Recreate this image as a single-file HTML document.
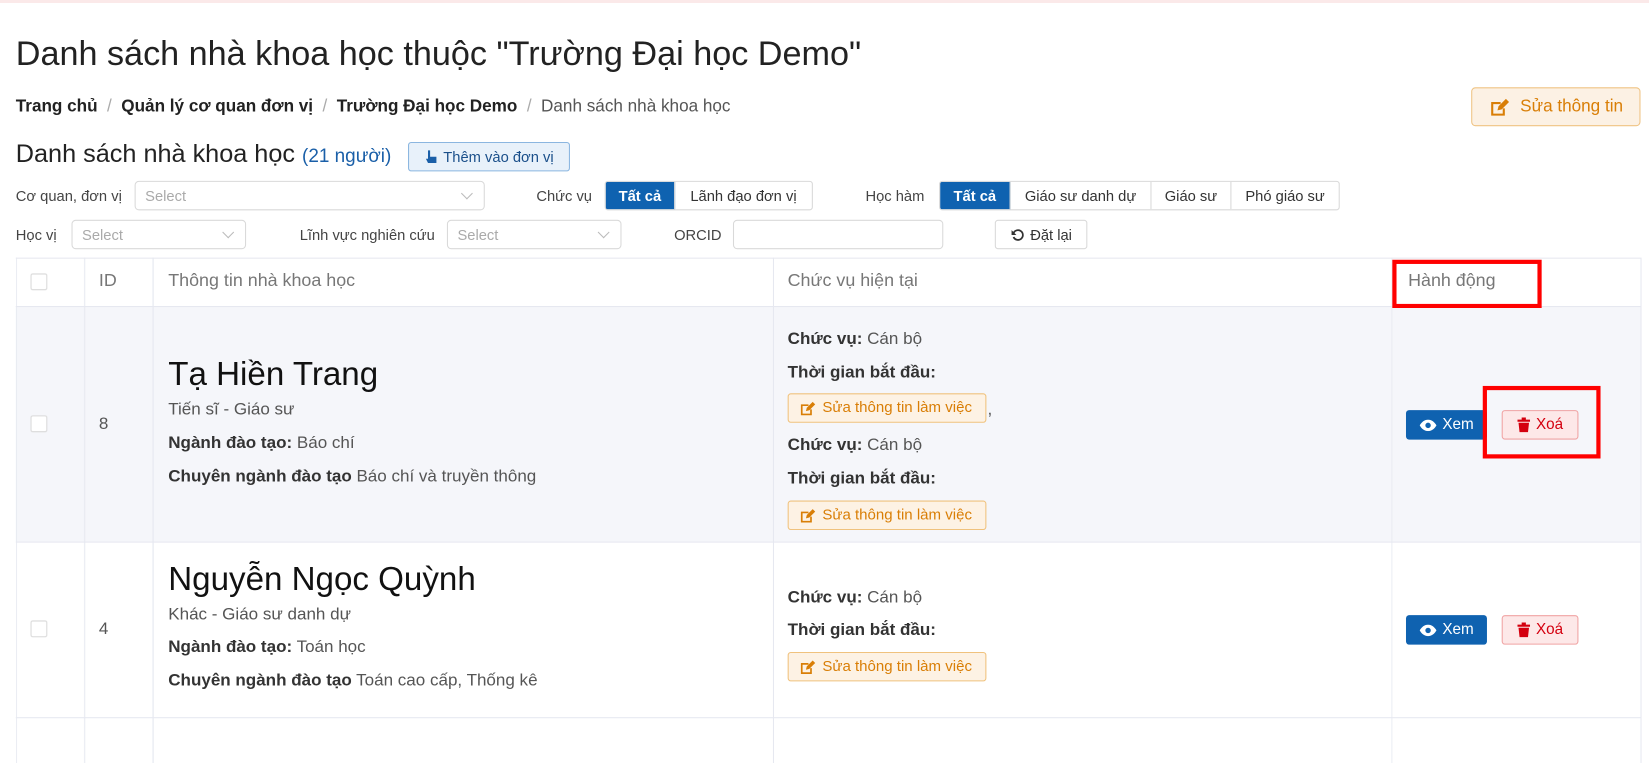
<!DOCTYPE html>
<html><head><meta charset="utf-8"><style>
*{box-sizing:border-box;margin:0;padding:0}
body{width:1649px;height:726px;overflow:hidden;background:#fff;font-family:"Liberation Sans","Noto Sans CJK SC",sans-serif;color:#333;position:relative;font-size:14px}
#w{position:absolute;left:0;top:0;width:1568px;height:691px;transform:scale(1.0516);transform-origin:0 0}
.a{position:absolute;white-space:nowrap}
.topline{position:absolute;left:0;top:0;width:1649px;height:3px;background:#fbe9e9}
h1{position:absolute;left:15px;top:33px;font-size:32.5px;font-weight:400;color:#222;white-space:nowrap}
.bc{left:15px;top:92px;font-size:16.3px;color:#555}
.bc b{color:#222}
.bc s{text-decoration:none;color:#aaa;margin:0 9px}
.btn{position:absolute;border:1px solid #d9d9d9;border-radius:3px;background:#fff;font-size:14px;display:flex;align-items:center;justify-content:center;color:#333;white-space:nowrap}
.sel{position:absolute;border:1px solid #d9d9d9;border-radius:4px;height:28px;color:#aaa;font-size:14px;padding:5px 9px}
.dd:after{content:"";position:absolute;right:12px;top:7px;width:7px;height:7px;border-right:1px solid #bbb;border-bottom:1px solid #bbb;transform:rotate(45deg)}
.lbl{position:absolute;font-size:14px;color:#444;white-space:nowrap}
.grp{position:absolute;display:flex;height:28px;border:1px solid #d9d9d9;border-radius:3px;overflow:hidden}
.grp span{display:flex;align-items:center;justify-content:center;font-size:14px;border-right:1px solid #d9d9d9;color:#333;white-space:nowrap}
.grp span:last-child{border-right:0}
.grp .on{background:#0f62b0;color:#fff;font-weight:bold}
.vl{position:absolute;width:1px;background:#e6e8f0}
.hl{position:absolute;height:1px;background:#e6e8f0;left:15px;width:1545px}
.cb{position:absolute;width:16px;height:16px;border:1px solid #d9d9d9;border-radius:2px;background:#fff}
.th{position:absolute;font-size:17px;color:#777;top:257px;white-space:nowrap}
.name{position:absolute;font-size:31.5px;color:#111;left:160px;white-space:nowrap}
.t{position:absolute;font-size:16.2px;color:#555;white-space:nowrap}
.t b{color:#333}
.ob{position:absolute;left:749px;width:189px;height:28px;background:#fdf2e4;border:1px solid #f0c27d;border-radius:3px;color:#d97e06;font-size:14.3px;display:flex;align-items:center;padding-left:10px;gap:6px;white-space:nowrap}
.xem{position:absolute;left:1337px;width:77px;height:28px;background:#0f62b0;color:#fff;border-radius:3px;font-size:14.5px;display:flex;align-items:center;justify-content:center;gap:6px}
.xoa{position:absolute;left:1428px;width:73px;height:28px;background:#fde8e8;border:1px solid #f0a3a3;color:#d4000f;border-radius:3px;font-size:14.5px;display:flex;align-items:center;justify-content:center;gap:6px}
.red{position:absolute;border:4px solid #ff0000}
</style></head><body>
<div class="topline"></div>
<div id="w">
<h1>Danh sách nhà khoa học thuộc "Trường Đại học Demo"</h1>
<div class="a bc"><b>Trang chủ</b><s>/</s><b>Quản lý cơ quan đơn vị</b><s>/</s><b>Trường Đại học Demo</b><s>/</s>Danh sách nhà khoa học</div>
<div class="btn" style="left:1399px;top:83px;width:161px;height:37px;background:#fcf1e4;border-color:#efc383;color:#d97e06;font-size:16.3px;gap:10px;border-radius:4px">
<svg width="20" height="18" viewBox="0 0 20 18"><path d="M2 4h9v2H4v9h9v-5h2v7H2z" fill="#d97e06"/><path d="M8 12l1-4 7-7 3 3-7 7z" fill="#d97e06"/></svg>Sửa thông tin</div>
<div class="a" style="left:15px;top:133px;font-size:24px;color:#222">Danh sách nhà khoa học <span style="font-size:18px;color:#1a5fa8">(21 người)</span></div>
<div class="btn" style="left:388px;top:135px;width:154px;height:28px;background:#e8f1fa;border-color:#8bb6e0;color:#1a4f8a;gap:6px">
<svg width="12" height="14" viewBox="0 0 12 14"><path d="M3 1h2v6h6v6H3L1 9h2z" fill="#1a5fa8"/></svg>Thêm vào đơn vị</div>

<div class="lbl" style="left:15px;top:178px">Cơ quan, đơn vị</div>
<div class="sel dd" style="left:128px;top:172px;width:333px">Select</div>
<div class="lbl" style="left:510px;top:178px">Chức vụ</div>
<div class="grp" style="left:575px;top:172px;width:198px"><span class="on" style="width:66px">Tất cả</span><span style="flex:1">Lãnh đạo đơn vị</span></div>
<div class="lbl" style="left:823px;top:178px">Học hàm</div>
<div class="grp" style="left:893px;top:172px;width:381px"><span class="on" style="width:67px">Tất cả</span><span style="width:134px">Giáo sư danh dự</span><span style="width:76px">Giáo sư</span><span style="flex:1">Phó giáo sư</span></div>

<div class="lbl" style="left:15px;top:215px">Học vị</div>
<div class="sel dd" style="left:68px;top:209px;width:166px">Select</div>
<div class="lbl" style="left:285px;top:215px">Lĩnh vực nghiên cứu</div>
<div class="sel dd" style="left:425px;top:209px;width:166px">Select</div>
<div class="lbl" style="left:641px;top:215px">ORCID</div>
<div class="sel" style="left:697px;top:209px;width:200px"></div>
<div class="btn" style="left:946px;top:209px;width:88px;height:28px;gap:6px"><svg width="13" height="13" viewBox="0 0 14 14"><path d="M3 5a5 5 0 1 1 0 4" fill="none" stroke="#333" stroke-width="1.8"/><path d="M1 2v5h5z" fill="#333"/></svg>Đặt lại</div>

<div style="position:absolute;left:15px;top:291px;width:1545px;height:224px;background:#f5f6fa"></div>
<div class="hl" style="top:245px"></div><div class="hl" style="top:291px"></div><div class="hl" style="top:515px"></div><div class="hl" style="top:682px"></div>
<div class="vl" style="left:15px;top:245px;height:481px"></div>
<div class="vl" style="left:80px;top:245px;height:481px"></div>
<div class="vl" style="left:145px;top:245px;height:481px"></div>
<div class="vl" style="left:735px;top:245px;height:481px"></div>
<div class="vl" style="left:1323px;top:245px;height:481px"></div>
<div class="vl" style="left:1560px;top:245px;height:481px"></div>
<div class="cb" style="left:29px;top:260px"></div>
<div class="th" style="left:94px">ID</div>
<div class="th" style="left:160px">Thông tin nhà khoa học</div>
<div class="th" style="left:749px">Chức vụ hiện tại</div>
<div class="th" style="left:1339px">Hành động</div>

<div class="cb" style="left:29px;top:395px"></div>
<div class="t" style="left:94px;top:394px">8</div>
<div class="name" style="top:337px">Tạ Hiền Trang</div>
<div class="t" style="left:160px;top:380px">Tiến sĩ - Giáo sư</div>
<div class="t" style="left:160px;top:412px"><b>Ngành đào tạo:</b> Báo chí</div>
<div class="t" style="left:160px;top:444px"><b>Chuyên ngành đào tạo</b> Báo chí và truyền thông</div>
<div class="t" style="left:749px;top:313px"><b>Chức vụ:</b> Cán bộ</div>
<div class="t" style="left:749px;top:345px"><b>Thời gian bắt đầu:</b></div>
<div class="ob" style="top:374px"><svg width="16" height="15" viewBox="0 0 20 18"><path d="M2 4h9v2H4v9h9v-5h2v7H2z" fill="#d97e06"/><path d="M8 12l1-4 7-7 3 3-7 7z" fill="#d97e06"/></svg>Sửa thông tin làm việc</div>
<div class="t" style="left:939px;top:380px">,</div>
<div class="t" style="left:749px;top:414px"><b>Chức vụ:</b> Cán bộ</div>
<div class="t" style="left:749px;top:446px"><b>Thời gian bắt đầu:</b></div>
<div class="ob" style="top:476px"><svg width="16" height="15" viewBox="0 0 20 18"><path d="M2 4h9v2H4v9h9v-5h2v7H2z" fill="#d97e06"/><path d="M8 12l1-4 7-7 3 3-7 7z" fill="#d97e06"/></svg>Sửa thông tin làm việc</div>
<div class="xem" style="top:390px"><svg width="16" height="11" viewBox="0 0 16 11"><path d="M0 5.5C2 2 5 0 8 0s6 2 8 5.5C14 9 11 11 8 11S2 9 0 5.5z" fill="#fff"/><circle cx="8" cy="5.5" r="2.6" fill="#0f62b0"/></svg>Xem</div>
<div class="xoa" style="top:390px"><svg width="12" height="14" viewBox="0 0 12 14"><path d="M0 2h12v2H0zM4 0h4v2H4zM1 5h10l-1 9H2z" fill="#d4000f"/></svg>Xoá</div>

<div class="cb" style="left:29px;top:590px"></div>
<div class="t" style="left:94px;top:589px">4</div>
<div class="name" style="top:532px">Nguyễn Ngọc Quỳnh</div>
<div class="t" style="left:160px;top:575px">Khác - Giáo sư danh dự</div>
<div class="t" style="left:160px;top:606px"><b>Ngành đào tạo:</b> Toán học</div>
<div class="t" style="left:160px;top:638px"><b>Chuyên ngành đào tạo</b> Toán cao cấp, Thống kê</div>
<div class="t" style="left:749px;top:559px"><b>Chức vụ:</b> Cán bộ</div>
<div class="t" style="left:749px;top:590px"><b>Thời gian bắt đầu:</b></div>
<div class="ob" style="top:620px"><svg width="16" height="15" viewBox="0 0 20 18"><path d="M2 4h9v2H4v9h9v-5h2v7H2z" fill="#d97e06"/><path d="M8 12l1-4 7-7 3 3-7 7z" fill="#d97e06"/></svg>Sửa thông tin làm việc</div>
<div class="xem" style="top:585px"><svg width="16" height="11" viewBox="0 0 16 11"><path d="M0 5.5C2 2 5 0 8 0s6 2 8 5.5C14 9 11 11 8 11S2 9 0 5.5z" fill="#fff"/><circle cx="8" cy="5.5" r="2.6" fill="#0f62b0"/></svg>Xem</div>
<div class="xoa" style="top:585px"><svg width="12" height="14" viewBox="0 0 12 14"><path d="M0 2h12v2H0zM4 0h4v2H4zM1 5h10l-1 9H2z" fill="#d4000f"/></svg>Xoá</div>

<div class="red" style="left:1324px;top:247px;width:142px;height:46px"></div>
<div class="red" style="left:1410px;top:367px;width:112px;height:69px"></div>
</div>
</body></html>
